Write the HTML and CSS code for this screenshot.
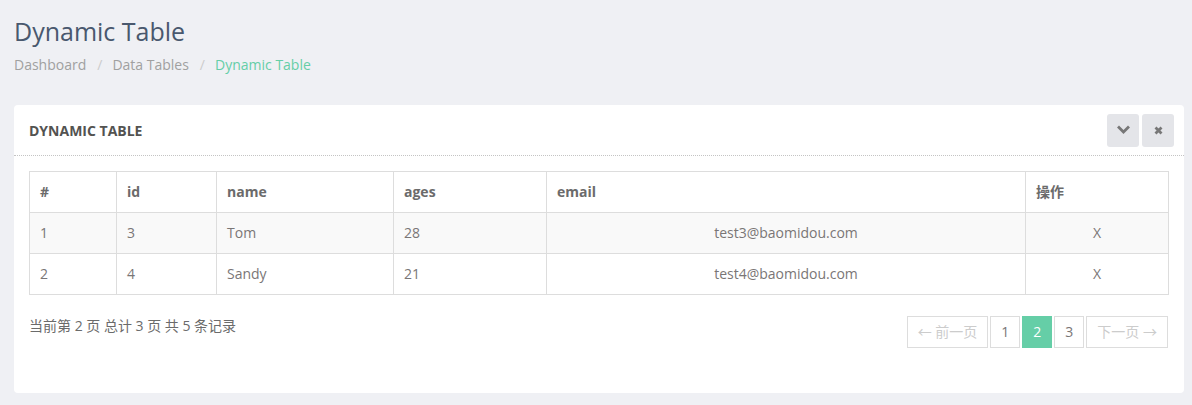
FILE: index.html
```html
<!DOCTYPE html>
<html lang="en">
<head>
    <meta charset="UTF-8">
    <title>Dynamic Table</title>
    <link rel="stylesheet" href="styles.css">
</head>
<body>
    <div class="page-head">
        <h1>Dynamic Table</h1>
        <ul class="breadcrumb">
            <li><a href="#">Dashboard</a></li>
            <li><a href="#">Data Tables</a></li>
            <li class="active">Dynamic Table</li>
        </ul>
    </div>

    <div class="wrapper">
        <section class="panel">
            <header class="panel-heading">
                <span>Dynamic Table</span>
                <span class="tools">
                    <a href="#" class="tool-btn">
                        <svg width="13" height="12" viewBox="0 0 13 12"><path d="M2 3.5 L6.5 8 L11 3.5" fill="none" stroke="#777" stroke-width="2.8" stroke-linecap="square"/></svg>
                    </a>
                    <a href="#" class="tool-btn">
                        <svg width="11" height="11" viewBox="0 0 11 11"><path d="M2.5 2.5 L8.5 8.5 M8.5 2.5 L2.5 8.5" fill="none" stroke="#777" stroke-width="2.8"/></svg>
                    </a>
                </span>
            </header>
            <div class="panel-body">
                <table class="data-table">
                    <thead>
                        <tr>
                            <th class="c-no">#</th>
                            <th class="c-id">id</th>
                            <th class="c-name">name</th>
                            <th class="c-age">ages</th>
                            <th class="c-email">email</th>
                            <th class="c-op">操作</th>
                        </tr>
                    </thead>
                    <tbody>
                        <tr>
                            <td>1</td>
                            <td>3</td>
                            <td>Tom</td>
                            <td>28</td>
                            <td class="center">test3@baomidou.com</td>
                            <td class="center">X</td>
                        </tr>
                        <tr>
                            <td>2</td>
                            <td>4</td>
                            <td>Sandy</td>
                            <td>21</td>
                            <td class="center">test4@baomidou.com</td>
                            <td class="center">X</td>
                        </tr>
                    </tbody>
                </table>

                <div class="table-foot">
                    <div class="info">当前第 2 页 总计 3 页 共 5 条记录</div>
                    <ul class="pagination">
                        <li class="disabled"><a href="#">← 前一页</a></li>
                        <li><a href="#">1</a></li>
                        <li class="active"><a href="#">2</a></li>
                        <li><a href="#">3</a></li>
                        <li class="disabled"><a href="#">下一页 →</a></li>
                    </ul>
                </div>
            </div>
        </section>
    </div>
</body>
</html>
```

FILE: styles.css
```css
body {
    font-family: 'Open Sans', 'Noto Sans CJK SC', sans-serif;
    background-color: #eff0f4;
    color: #7a7676;
    font-size: 14px;
    margin: 0;
    padding: 0;
}

a {
    text-decoration: none;
}

.page-head {
    padding: 15px 14px 0;
}

.page-head h1 {
    margin: 0;
    font-size: 25px;
    font-weight: normal;
    line-height: 32px;
    color: #49586e;
}

.breadcrumb {
    list-style: none;
    margin: 8px 0 0;
    padding: 0;
    display: flex;
    line-height: 20px;
}

.breadcrumb li a {
    color: #a0a0a0;
}

.breadcrumb li + li::before {
    content: "/";
    color: #ccc;
    padding: 0 10px 0 11px;
}

.breadcrumb .active {
    color: #65cea7;
}

.wrapper {
    padding: 30px 8px 0 14px;
}

.panel {
    background-color: #fff;
    border-radius: 4px;
    height: 288px;
}

.panel-heading {
    display: flex;
    justify-content: space-between;
    align-items: center;
    height: 50px;
    padding: 0 10px 0 15px;
    border-bottom: 1px dotted #c4c4c4;
    text-transform: uppercase;
    font-size: 14px;
    font-weight: bold;
    color: #535351;
}

.tools {
    display: flex;
    gap: 3px;
}

.tool-btn {
    width: 32px;
    height: 33px;
    background-color: #e4e5e9;
    border-radius: 3px;
    display: flex;
    align-items: center;
    justify-content: center;
}

.panel-body {
    padding: 15px;
}

.data-table {
    width: 100%;
    border-collapse: collapse;
}

.data-table th, .data-table td {
    border: 1px solid #dddddd;
    padding: 10px;
    line-height: 20px;
    text-align: left;
}

.data-table th {
    color: #6b6b6b;
    font-weight: bold;
}

.data-table td.center {
    text-align: center;
}

.data-table tbody tr:nth-child(odd) {
    background-color: #f9f9f9;
}

.c-no { width: 66px; }
.c-id { width: 79px; }
.c-name { width: 156px; }
.c-age { width: 132px; }
.c-email { width: 458px; }

.table-foot {
    display: flex;
    justify-content: space-between;
    align-items: flex-start;
    margin-top: 21px;
}

.info {
    line-height: 20px;
    font-size: 14px;
    color: #6b6b6b;
}

.pagination {
    list-style: none;
    margin: 0 1px 0 0;
    padding: 0;
    display: flex;
    gap: 2px;
}

.pagination li a {
    display: block;
    min-width: 28px;
    height: 30px;
    line-height: 30px;
    text-align: center;
    border: 1px solid #dddddd;
    color: #7a7676;
    padding: 0;
}

.pagination li.disabled a {
    color: #cccccc;
    padding: 0 10px;
}

.pagination li.active a {
    background-color: #65cea7;
    border-color: #65cea7;
    color: #fff;
}
```
